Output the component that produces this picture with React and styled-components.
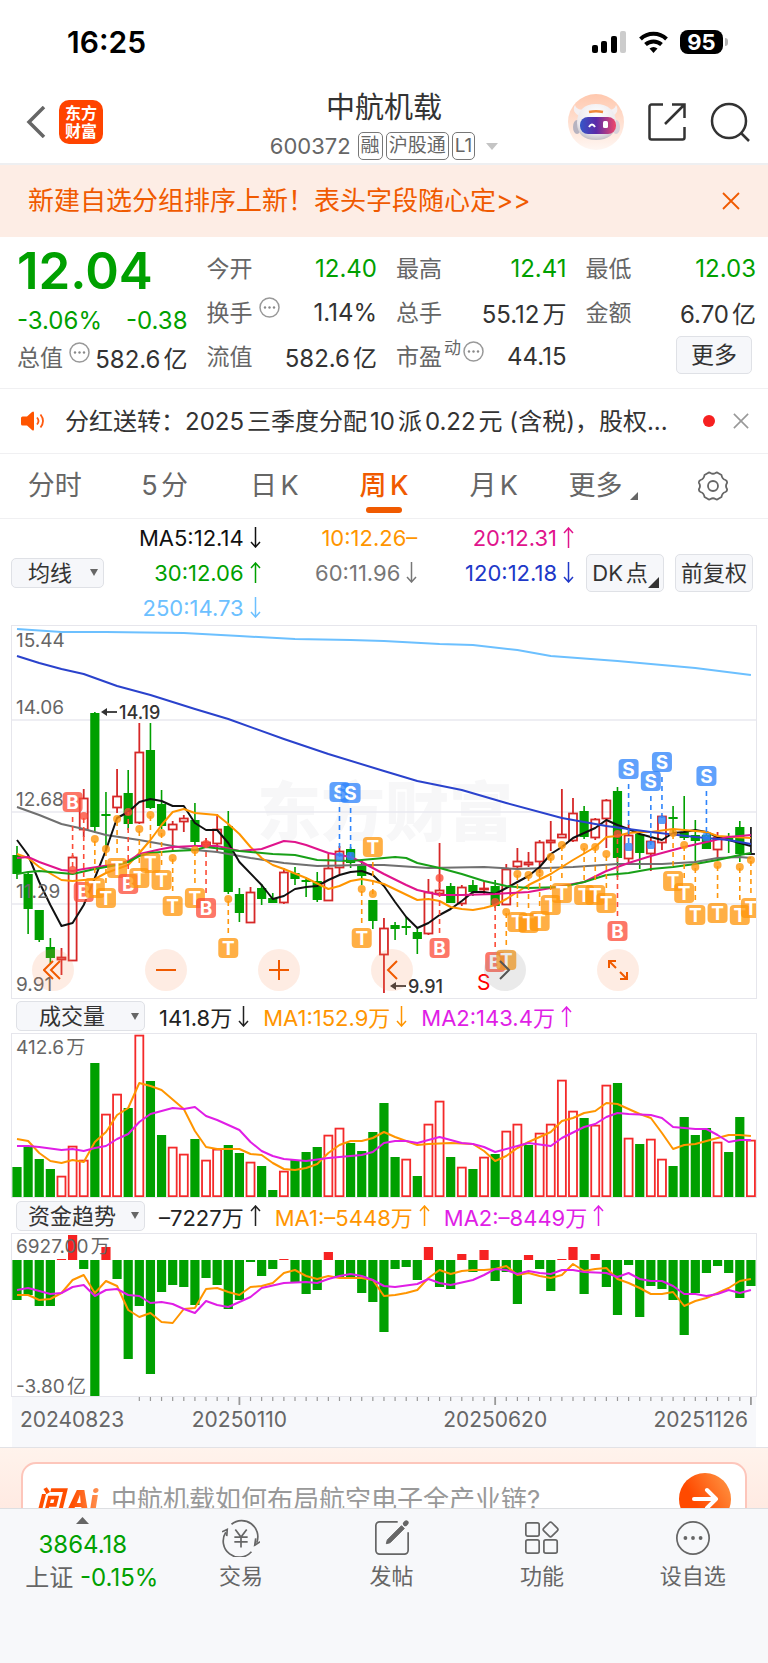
import React from 'react';
import styled, { createGlobalStyle } from 'styled-components';

const GREEN = '#00a000';
const ORANGE = '#f05a00';
const AMBER = '#ff9500';
const VIOLET = '#e01ee6';

const GlobalStyle = createGlobalStyle`
  * { box-sizing: border-box; }
  body {
    margin: 0;
    background: #fff;
    color: #333;
    font-family: Inter, "Noto Sans CJK SC", sans-serif;
    text-autospace: normal;
  }
  button, select, input { font: inherit; color: inherit; margin: 0; }
  button { background: none; border: 0; padding: 0; cursor: pointer; }
  svg { display: block; flex: none; }
`;

/* ---------- status bar and header ---------- */

const StatusBar = styled.div`
  display: flex;
  align-items: center;
  justify-content: space-between;
  height: 76px;
  padding: 8px 40px 0 67px;
`;
const Clock = styled.time`
  font-size: 30px;
  font-weight: 600;
  color: #000;
`;
const StatusIcons = styled.div`
  display: flex;
  align-items: center;
  gap: 12px;
`;
const Battery = styled.div`
  display: flex;
  align-items: center;
  gap: 2px;
  &::after {
    content: '';
    width: 3px;
    height: 8px;
    border-radius: 0 3px 3px 0;
    background: #b4b4b4;
  }
`;
const BatteryLevel = styled.span`
  width: 43px;
  height: 24px;
  border-radius: 8px;
  background: #000;
  color: #fff;
  font-size: 22px;
  font-weight: 700;
  line-height: 24px;
  text-align: center;
`;
const Header = styled.header`
  display: grid;
  grid-template-columns: 1fr auto 1fr;
  height: 89px;
  padding: 0 18px;
  border-bottom: 2px solid #eeeff1;
`;
const HeaderSide = styled.div`
  display: flex;
  align-items: center;
  justify-content: ${(p) => (p.$end ? 'flex-end' : 'flex-start')};
  gap: ${(p) => (p.$end ? 24 : 13)}px;
  height: 92px;
  padding-left: 8px;
`;
const HomeButton = styled.button`
  width: 44px;
  height: 44px;
  border-radius: 10px;
  background: #ff4400;
  color: #fff;
  font-size: 16px;
  font-weight: 700;
  line-height: 18px;
`;
const Title = styled.div`
  display: flex;
  flex-direction: column;
  align-items: center;
  h1 {
    margin: 12px 0 0;
    font-size: 29px;
    font-weight: 400;
    line-height: 40px;
  }
`;
const Code = styled.div`
  display: flex;
  align-items: center;
  gap: 3px;
  height: 36px;
  font-size: 22px;
  color: #666;
`;
const CodeText = styled.span`
  margin-right: 4px;
`;
const Tag = styled.span`
  height: 28px;
  padding: 0 2px;
  border: 1px solid #777;
  border-radius: 5px;
  font-size: 19px;
  line-height: 26px;
`;
const Caret = styled.i`
  width: 0;
  height: 0;
  border: ${(p) => p.$size}px solid transparent;
  border-bottom-width: 0;
  border-top: 7px solid ${(p) => p.$color};
`;
const CodeCaret = styled(Caret)`
  margin-left: 8px;
`;

/* ---------- banner, quote, notice ---------- */

const Banner = styled.div`
  display: flex;
  align-items: center;
  justify-content: space-between;
  height: 72px;
  padding: 0 28px;
  background: #fdede5;
  color: ${ORANGE};
  font-size: 26px;
  a { padding-bottom: 5px; color: inherit; text-decoration: none; }
`;
const Quote = styled.section`
  display: grid;
  grid-template-columns: repeat(4, 1fr);
  gap: 19px;
  height: 151px;
  padding: 5px 12px 0 17px;
`;
const QuoteColumn = styled.div`
  display: flex;
  flex-direction: column;
  padding-top: ${(p) => (p.$lead ? 0 : 4)}px;
`;
const Price = styled.strong`
  font-size: 51px;
  font-weight: 600;
  line-height: 58px;
  color: ${GREEN};
`;
const Cell = styled.div`
  display: flex;
  align-items: center;
  justify-content: space-between;
  height: ${(p) => p.$height || 44}px;
  font-size: 24px;
  color: ${(p) => (p.$down ? GREEN : '#333')};
  white-space: nowrap;
`;
const CellLabel = styled.span`
  display: flex;
  align-items: center;
  padding-bottom: 2px;
  font-size: 23px;
  color: #666;
  svg { margin: 0 0 8px 6px; }
  sup { font-size: 17px; line-height: 20px; margin: 0 -4px 14px 2px; }
`;
const OutlineButton = styled.button`
  position: relative;
  height: 38px;
  min-width: ${(p) => p.$width}px;
  border: 1px solid #dfe1e6;
  border-radius: 5px;
  background: #f6f7fa;
  font-size: 22px;
  line-height: 30px;
  white-space: nowrap;
`;
const MoreButton = styled(OutlineButton)`
  margin: 0 4px 2px auto;
  font-size: 23px;
`;
const MenuButton = styled(OutlineButton)`
  padding: 0 12px 0 2px;
`;
const Notice = styled.section`
  display: flex;
  align-items: center;
  height: 65px;
  padding: 0 19px 0 20px;
  border-top: 1px solid #f0f0f2;
  font-size: 24px;
  p {
    flex: 1;
    margin: 0 0 4px 20px;
    white-space: nowrap;
    overflow: hidden;
  }
`;
const UnreadDot = styled.i`
  width: 12px;
  height: 12px;
  margin: 0 18px;
  border-radius: 50%;
  background: #f62020;
`;

/* ---------- tabs and moving averages ---------- */

const Tabs = styled.nav`
  display: grid;
  grid-template-columns: repeat(7, 1fr);
  height: 66px;
  border-top: 1px solid #f0f0f2;
  border-bottom: 1px solid #f0f0f2;
`;
const Tab = styled.button`
  position: relative;
  display: flex;
  align-items: center;
  justify-content: center;
  padding-bottom: ${(p) => (p.$icon ? 0 : 5)}px;
  font-size: 27px;
  font-weight: ${(p) => (p.$active ? 500 : 400)};
  color: ${(p) => (p.$active ? ORANGE : '#666')};
  &::after {
    content: '';
    display: ${(p) => (p.$active ? 'block' : 'none')};
    position: absolute;
    bottom: 5px;
    left: calc(50% - 18px);
    width: 36px;
    height: 6px;
    border-radius: 3px;
    background: ${ORANGE};
  }
`;
const Corner = styled.i`
  width: 0;
  height: 0;
  border-style: solid;
  border-width: 0 0 ${(p) => p.$size}px ${(p) => p.$size}px;
  border-color: transparent transparent ${(p) => p.$color} transparent;
`;
const TabCorner = styled(Corner)`
  margin: 24px 0 0 8px;
`;
const ButtonCorner = styled(Corner)`
  position: absolute;
  right: 4px;
  bottom: 3px;
`;
const Averages = styled.section`
  display: flex;
  align-items: center;
  height: 107px;
  padding: 0 15px 0 11px;
`;
const AverageGrid = styled.div`
  display: grid;
  grid-template-columns: repeat(3, 1fr);
  grid-auto-rows: 35px;
  flex: 1;
  margin-right: 12px;
`;
const Reading = styled.span`
  display: flex;
  align-items: center;
  justify-content: flex-end;
  gap: 6px;
  font-size: 22px;
  color: ${(p) => p.$color};
  white-space: nowrap;
  text-autospace: no-autospace;
`;
const ButtonPair = styled.div`
  display: flex;
  gap: 11px;
`;
const Picker = styled.label`
  position: relative;
  display: flex;
  align-items: center;
  select {
    appearance: none;
    width: ${(p) => p.$width}px;
    height: 30px;
    padding: 0 20px 0 ${(p) => p.$left}px;
    border: 1px solid #dfe1e6;
    border-radius: 5px;
    background: #f6f7fa;
    font-size: 22px;
    line-height: 26px;
  }
  i {
    position: absolute;
    right: 6px;
    pointer-events: none;
  }
`;

/* ---------- charts ---------- */

const ChartFrame = styled.div`
  position: relative;
  margin: 0 12px;
  outline: 1px solid #e6e6ec;
  overflow: hidden;
  > svg { width: 100%; height: auto; }
`;
const ChartControls = styled.div`
  position: absolute;
  left: 20px;
  right: 117px;
  bottom: 7px;
  display: flex;
  justify-content: space-between;
`;
const RoundButton = styled.button`
  display: flex;
  align-items: center;
  justify-content: center;
  width: 42px;
  height: 42px;
  border-radius: 50%;
  background: ${(p) => (p.$muted ? 'rgba(150,150,150,.2)' : 'rgba(250,140,90,.17)')};
  color: ${(p) => (p.$muted ? '#555' : ORANGE)};
`;
const IndicatorRow = styled.div`
  display: flex;
  align-items: center;
  gap: 14px;
  height: ${(p) => p.$height}px;
  padding-left: 16px;
`;
const TimeAxis = styled.div`
  margin: 0 12px;
  height: 51px;
  background: #f7f8fb;
  > svg { width: 100%; height: auto; }
`;

/* ---------- assistant and bottom navigation ---------- */

const Assistant = styled.section`
  height: 61px;
  padding: 14px 21px 0;
  overflow: hidden;
  border-top: 1px solid #e2e2e6;
  background: linear-gradient(#fff3ec, #ffeae2);
`;
const AssistantCard = styled.div`
  display: flex;
  align-items: center;
  gap: 9px;
  height: 74px;
  padding: 0 14px 0 13px;
  border: 2px solid #fdc6bb;
  border-radius: 15px;
  background: #fff;
  input {
    flex: 1;
    padding: 0;
    border: 0;
    outline: 0;
    background: none;
    font-size: 26px;
  }
  input::placeholder { color: #999; opacity: 1; }
`;
const AssistantName = styled.b`
  padding-right: 4px;
  font-size: 28px;
  font-weight: 900;
  font-style: italic;
  background: linear-gradient(90deg, #ff4e00 55%, #ff9a5c);
  background-clip: text;
  color: transparent;
`;
const SendButton = styled.button`
  display: flex;
  align-items: center;
  justify-content: center;
  width: 52px;
  height: 52px;
  border-radius: 50%;
  background: linear-gradient(60deg, #ff4a00 35%, #ff9a48);
`;
const BottomNav = styled.nav`
  display: grid;
  grid-template-columns: 11fr repeat(4, 10fr);
  height: 155px;
  border-top: 1px solid #dddfe2;
  background: #f7f8fa;
  color: #666;
`;
const NavItem = styled.a`
  display: flex;
  flex-direction: column;
  align-items: center;
  padding-top: 10px;
  color: inherit;
  font-size: 22px;
  line-height: 28px;
  text-decoration: none;
  svg { margin-bottom: 5px; }
`;
const IndexItem = styled.button`
  display: flex;
  flex-direction: column;
  align-items: center;
  align-self: start;
  padding-top: 8px;
  font-size: 24px;
  line-height: 33px;
  white-space: nowrap;
  svg { margin-bottom: 4px; }
  em { color: ${GREEN}; font-style: normal; }
`;
const IndexChange = styled.span`
  padding-left: 18px;
`;

/* ---------- data ---------- */

// Each candle: [kind, high, low, body top, body bottom]
const candles = [
  ['g', 220, 253, 229, 248], ['g', 246, 308, 248, 283], ['g', 284, 316, 284, 314], ['g', 312, 337, 321, 332],
  ['r', 322, 349, 331, 333], ['r', 229, 334, 231, 334], ['r', 163, 211, 172, 203], ['g', 86, 207, 87, 201],
  ['g', 166, 224, 188, 190], ['r', 143, 187, 170, 181], ['g', 144, 204, 167, 198], ['r', 97, 198, 126, 196],
  ['g', 97, 183, 124, 182], ['g', 164, 203, 178, 200], ['r', 195, 224, 198, 203], ['r', 189, 206, 192, 195],
  ['g', 177, 219, 194, 216], ['r', 212, 222, 216, 218], ['r', 188, 226, 203, 217], ['g', 185, 268, 200, 266],
  ['g', 262, 296, 268, 287], ['r', 261, 296, 266, 296], ['g', 258, 279, 262, 273], ['g', 267, 277, 272, 277],
  ['r', 242, 278, 246, 276], ['g', 241, 259, 247, 253], ['g', 251, 271, 254, 256], ['g', 246, 276, 255, 274],
  ['r', 228, 275, 242, 274], ['r', 220, 248, 225, 241], ['g', 221, 242, 223, 237], ['g', 234, 259, 239, 250],
  ['g', 274, 303, 274, 295], ['r', 292, 367, 302, 328], ['g', 296, 314, 299, 303], ['g', 291, 309, 300, 302],
  ['g', 302, 328, 306, 313], ['r', 253, 309, 266, 307], ['r', 217, 268, 264, 267], ['g', 257, 277, 260, 277],
  ['r', 259, 280, 261, 277], ['g', 254, 270, 259, 266], ['r', 256, 268, 262, 263], ['g', 254, 282, 260, 280],
  ['r', 238, 279, 243, 278], ['r', 222, 242, 235, 240], ['r', 226, 241, 236, 238], ['r', 214, 247, 216, 235],
  ['r', 195, 225, 214, 216], ['r', 163, 212, 208, 211], ['r', 172, 216, 187, 214], ['g', 180, 213, 185, 211],
  ['r', 192, 214, 193, 211], ['r', 173, 222, 174, 192], ['g', 161, 251, 165, 232], ['r', 198, 236, 209, 232],
  ['g', 207, 243, 208, 227], ['r', 210, 245, 215, 227], ['r', 189, 224, 190, 216], ['g', 180, 206, 191, 193],
  ['g', 170, 214, 206, 212], ['g', 194, 237, 209, 215], ['g', 207, 223, 209, 223], ['r', 206, 234, 211, 223],
  ['g', 207, 227, 212, 214], ['g', 195, 236, 201, 228], ['k', 201, 228, 227, 228],
];

// Lines are "week,y" pairs
const priceLines = [
  ['#6cc0ff', '0,3 4,6 8,6 15,7 20,10 25,13 30,14 33,15 38,18 41,19 45,24 48,30 54,35 61,42 66,49'],
  ['#707070', '0,181 2,189 4,198 6,203 8,209 11,214 14,220 16,224 18,226 21,232 24,237 27,240 31,239 33,239 37,242 42,241 45,243 50,241 54,238 58,238 61,236 63,232 65,231 66,232'],
  ['#111111', '0,214 1,229 2,256 3,279 4,300 5,297 6,279 7,252 8,224 9,192 10,186 11,176 12,173 13,175 14,180 15,180 16,197 17,204 18,204 19,217 20,236 22,259 23,273 24,270 25,263 26,261 27,260 28,254 29,249 30,246 31,245 32,249 33,260 34,276 35,291 36,302 37,297 38,289 39,283 40,275 41,266 42,266 43,268 44,262 45,256 46,250 47,241 48,228 49,221 50,212 51,207 52,202 53,194 54,199 55,203 56,208 57,211 58,214 59,207 60,206 61,204 62,206 63,211 64,214 65,217 66,220'],
  [AMBER, '0,228 1,232 2,241 4,254 5,255 7,253 8,247 9,243 10,239 11,227 12,214 13,199 14,186 15,183 16,187 18,189 19,198 20,208 21,221 22,232 23,239 24,243 26,252 28,263 29,260 30,255 31,253 32,255 33,258 36,274 37,273 38,275 39,281 40,283 41,284 42,282 43,279 44,273 45,266 46,259 48,248 50,234 52,221 53,211 54,210 55,207 56,206 57,206 59,203 60,204 62,206 63,210 66,212'],
  ['#e0148c', '0,232 1,231 2,236 4,244 5,245 6,243 9,238 10,235 11,228 13,223 14,221 16,220 18,220 20,225 22,223 24,215 25,216 26,219 27,223 28,227 30,231 31,236 32,242 33,248 35,259 36,264 38,269 40,269 43,268 46,266 48,262 51,256 53,245 55,237 57,230 58,227 60,221 62,216 64,211 66,209'],
  ['#18a018', '0,248 1,246 2,245 4,247 5,248 7,243 9,239 10,236 11,230 12,227 14,225 16,224 17,221 20,225 23,228 25,229 27,234 30,235 33,232 34,231 35,232 36,237 38,242 40,248 42,255 44,260 46,262 49,261 51,256 53,249 55,247 57,243 59,241 61,238 63,234 65,229 66,227'],
  ['#2a42cc', '0,30 2,37 4,43 6,48 9,60 12,69 16,83 19,93 24,113 28,128 33,145 36,155 40,164 44,177 49,192 53,200 57,206 61,211 64,214 66,218'],
];

// Each signal: [letter, week, dot y, badge y]
const signals = [
  ['B', 5, 244, 176], ['B', 6, 190, 266], ['T', 7, 213, 262], ['T', 8, 223, 272], ['T', 9, 193, 242],
  ['B', 10, 186, 258], ['T', 11, 203, 252], ['T', 12, 189, 237], ['T', 13, 207, 254], ['T', 14, 232, 280],
  ['T', 16, 224, 272], ['B', 17, 218, 282], ['T', 19, 273, 322], ['S', 29, 231, 166], ['S', 30, 230, 167],
  ['T', 31, 263, 312], ['T', 32, 268, 221], ['B', 38, 252, 322], ['B', 43, 276, 336], ['T', 44, 286, 334],
  ['T', 45, 248, 296], ['T', 46, 249, 297], ['T', 47, 247, 295], ['T', 48, 231, 279], ['T', 49, 219, 267],
  ['T', 51, 221, 269], ['T', 52, 221, 269], ['T', 53, 228, 277], ['B', 54, 208, 305], ['S', 55, 221, 143],
  ['S', 57, 219, 155], ['S', 58, 194, 136], ['T', 59, 207, 255], ['T', 60, 219, 267], ['T', 61, 241, 289],
  ['S', 62, 211, 150], ['T', 63, 239, 287], ['T', 65, 241, 289], ['T', 66, 234, 282],
];
const signalColors = { B: '#fc4c38', S: '#2e84fb', T: '#ff960a' };

const volumeTops = [
  133, 113, 125, 135, 142, 112, 126, 29, 80, 60, 74, 1, 47, 101, 113, 120, 105, 126, 115, 111, 119, 128, 132,
  156, 137, 126, 118, 113, 101, 94, 109, 117, 98, 69, 123, 125, 142, 90, 67, 123, 133, 135, 123, 120, 97, 90,
  111, 99, 90, 46, 77, 84, 91, 51, 49, 104, 110, 105, 125, 132, 83, 101, 94, 108, 118, 83, 106,
];
const volumeKinds = 'ggggrrrgrrgrggrrgrrggrggrgggrrgggggrgrrgrgrgrrgrrrrgrrgrgrrggggrggr';
const volumeLines = [
  [AMBER, '0,105 1,107 2,119 3,127 4,129 5,126 6,128 7,108 8,98 9,81 10,74 11,49 12,52 13,56 15,75 16,97 17,113 18,115 20,115 21,120 22,121 23,129 24,135 25,136 26,134 27,130 28,119 29,111 30,107 31,107 32,104 33,98 34,103 36,111 37,110 39,109 41,110 42,117 43,127 44,122 45,114 46,108 47,103 48,98 49,87 50,84 51,79 52,77 53,69 54,70 55,75 56,80 57,84 58,99 59,115 60,111 61,110 62,107 63,104 64,101 65,101 66,102'],
  [VIOLET, '0,112 1,112 2,113 4,116 5,115 6,117 7,114 8,112 9,105 10,100 11,88 12,80 13,77 14,74 15,75 16,73 17,82 18,86 19,91 20,96 21,108 22,117 23,122 24,125 26,127 28,124 31,121 32,118 33,109 34,107 35,107 36,109 38,103 40,109 41,110 42,113 43,118 45,112 46,109 48,112 49,104 51,93 52,90 53,83 54,79 55,80 57,81 58,84 59,93 61,95 62,95 63,101 64,108 65,106 66,106'],
];

const FUND_ZERO = 26;
const fundEnds = [
  66, 61, 72, 72, 25, 1, 35, 162, 13, 45, 125, 72, 140, 58, 51, 53, 71, 44, 51, 75, 66, 28, 42, 35, 25, 48, 60,
  56, 18, 43, 43, 59, 68, 98, 35, 33, 46, 13, 53, 55, 20, 38, 16, 47, 38, 70, 21, 35, 57, 25, 13, 60, 20, 53,
  81, 31, 83, 52, 55, 66, 101, 59, 39, 32, 39, 64, 52,
];
const fundLines = [
  [AMBER, '0,61 1,61 2,66 3,65 4,59 5,46 6,41 7,59 8,47 9,52 10,76 11,83 12,79 13,88 14,89 15,75 16,74 17,55 18,54 19,58 20,61 21,53 22,52 23,49 24,39 25,36 26,42 27,45 28,42 29,44 31,44 32,46 33,62 34,61 35,59 36,56 37,44 38,36 39,40 40,37 41,36 42,36 43,35 44,32 45,41 46,39 47,42 48,44 49,41 50,30 51,37 52,35 53,34 54,45 55,49 56,54 57,60 58,60 59,58 60,72 61,67 62,64 63,59 64,54 65,47 66,45'],
  [VIOLET, '0,56 1,54 2,57 3,60 4,59 5,53 6,51 7,62 8,56 9,55 10,61 11,62 12,69 13,68 14,70 15,75 16,79 17,67 18,71 19,73 20,68 21,63 22,54 24,49 26,48 27,49 28,45 29,42 30,40 31,42 32,46 33,52 34,53 36,50 37,45 38,49 39,51 41,46 42,41 43,35 44,36 45,40 46,37 47,39 48,40 49,36 50,36 51,38 53,39 54,43 55,39 56,45 57,47 58,47 59,52 60,60 61,60 62,62 63,60 64,56 65,59 66,56'],
];

const majorWeeks = [20, 43, 66];

const averages = [
  ['MA5:12.14', '#111', 'down'], ['10:12.26–', AMBER, ''], ['20:12.31', '#e0148c', 'up'],
  ['30:12.06', GREEN, 'up'], ['60:11.96', '#777', 'down'], ['120:12.18', '#2038c8', 'down'],
  ['250:14.73', '#6cc0ff', 'down'],
];

const quoteColumns = [
  [['今开', '12.40', true], ['换手', '1.14%', false, 'info'], ['流值', '582.6亿']],
  [['最高', '12.41', true], ['总手', '55.12万'], ['市盈', '44.15', false, 'dynamic']],
  [['最低', '12.03', true], ['金额', '6.70亿']],
];

const volumeReadings = [['141.8万', '#222', true], ['MA1:152.9万', AMBER, true], ['MA2:143.4万', VIOLET, false]];
const fundReadings = [['–7227万', '#222', false], ['MA1:–5448万', AMBER, false], ['MA2:–8449万', VIOLET, false]];

/* ---------- drawing helpers ---------- */

const weekX = (i) => 5 + i * 11.12;

const toPoints = (pairs) =>
  pairs
    .split(' ')
    .map((pair) => {
      const [i, y] = pair.split(',');
      return `${weekX(Number(i))},${y}`;
    })
    .join(' ');

const Lines = ({ lines }) =>
  lines.map(([color, pairs]) => (
    <polyline key={color} fill="none" stroke={color} strokeWidth="2" strokeLinejoin="round" points={toPoints(pairs)} />
  ));

const ChartLabel = ({ x = 4, y, size = 19, children, ...rest }) => (
  <text x={x} y={y} fontSize={size} fill="#666" dominantBaseline="central" {...rest}>
    {children}
  </text>
);

const LeftArrow = ({ x, y }) => (
  <g>
    <path d={`M${x + 16} ${y}H${x + 2}`} stroke="#333" strokeWidth="1.8" />
    <path d={`M${x} ${y}l6-4v8z`} fill="#333" />
  </g>
);

const Candle = ({ i, candle: [kind, high, low, top, bottom] }) => {
  const x = weekX(i);
  if (kind === 'k') {
    return <path d={`M${x} ${high}V${low}M${x - 5} ${bottom}h9`} stroke="#222" strokeWidth="1.8" />;
  }
  if (kind === 'g') {
    return (
      <g fill={GREEN}>
        <rect x={x - 0.8} y={high} width="1.6" height={low - high} />
        <rect x={x - 4.6} y={top} width="9.2" height={bottom - top} />
      </g>
    );
  }
  return (
    <g stroke="#d62828" strokeWidth="1.8" fill="none">
      <path d={`M${x} ${high}V${top}M${x} ${bottom}V${low}`} />
      <rect x={x - 4} y={top + 0.5} width="8" height={bottom - top} />
    </g>
  );
};

const Signal = ({ signal: [letter, i, dot, badge] }) => {
  const x = weekX(i);
  const color = signalColors[letter];
  const edge = badge > dot ? badge - 15 : badge + 15;
  return (
    <g>
      <path d={`M${x} ${edge}V${dot}`} stroke={color} strokeWidth="1.6" strokeDasharray="5 4" />
      {letter === 'S' ? (
        <rect x={x - 4} y={dot - 4} width="8" height="8" rx="2" fill={color} opacity=".8" />
      ) : (
        <circle cx={x} cy={dot} r="4" fill={color} opacity=".8" />
      )}
      <rect x={x - 10} y={badge - 10} width="20" height="20" rx="4" fill={color} opacity=".76" />
      <text x={x} y={badge} fill="#fff" fontSize="19" fontWeight="700" textAnchor="middle" dominantBaseline="central">
        {letter}
      </text>
    </g>
  );
};

const Arrow = ({ down }) => (
  <svg width="11" height="21" viewBox="0 0 11 21" fill="none" stroke="currentColor" strokeWidth="1.5">
    <path d={down ? 'M5.5 0V20M1 15l4.5 5 4.5-5' : 'M5.5 21V1M1 6l4.5-5L10 6'} />
  </svg>
);

const Cross = ({ size, color = 'currentColor' }) => (
  <svg width={size} height={size} viewBox="0 0 18 18" stroke={color} strokeWidth="1.8">
    <path d="M1 1l16 16M17 1L1 17" />
  </svg>
);

const InfoIcon = () => (
  <svg width="21" height="21" viewBox="0 0 21 21" fill="none" stroke="#999" strokeWidth="1.5">
    <circle cx="10.5" cy="10.5" r="9.5" />
    <g fill="#888" stroke="none">
      <circle cx="6" cy="10.5" r="1.2" />
      <circle cx="10.5" cy="10.5" r="1.2" />
      <circle cx="15" cy="10.5" r="1.2" />
    </g>
  </svg>
);

const Robot = () => (
  <svg width="56" height="56" viewBox="0 0 56 56">
    <defs>
      <linearGradient id="halo" x1="0" y1="0" x2="0" y2="1">
        <stop offset="0" stopColor="#ffc8ae" />
        <stop offset="1" stopColor="#fff7f3" />
      </linearGradient>
      <linearGradient id="visor">
        <stop offset="0" stopColor="#3457c8" />
        <stop offset=".45" stopColor="#5b2aa8" />
        <stop offset="1" stopColor="#f0486a" />
      </linearGradient>
      <radialGradient id="helmet" cx=".5" cy=".3" r=".75">
        <stop offset="0" stopColor="#ffffff" />
        <stop offset=".7" stopColor="#ebe8ec" />
        <stop offset="1" stopColor="#b9b4bd" />
      </radialGradient>
    </defs>
    <circle cx="28" cy="28" r="28" fill="url(#halo)" />
    <path d="M7 11c-3 5 0 9 5 11l5-6c-5 0-9-1-10-5zM48 11c3 5 1 9-4 11l-5-6c5 0 8-1 9-5z" fill="#f4f0f2" />
    <ellipse cx="9" cy="33" rx="4" ry="7" fill="#b7b3c0" />
    <ellipse cx="48" cy="33" rx="4" ry="7" fill="#d8d2da" />
    <path d="M28 10c12 0 20 7 20 19 0 11-8 17-20 17S9 40 9 29c0-12 7-19 19-19z" fill="url(#helmet)" />
    <path d="M21 18q7-1.500 14 0" stroke="#f08a3c" strokeWidth="2.500" fill="none" />
    <rect x="12" y="23" width="36" height="17" rx="8" fill="url(#visor)" />
    <path d="M21 33q3-5 6 0" stroke="#fff" strokeWidth="2" fill="none" />
    <rect x="35" y="27" width="5" height="7" rx="1.500" fill="#fff" />
  </svg>
);

const TradeIcon = () => (
  <>
    <path d="M10 5.500A17 17 0 0 1 36.500 25M31 34.500A17 17 0 0 1 4 14" />
    <path d="M0 13.500l5.500-2.500-.5 7M40 24l-5.500 3.500 1-7" />
    <path d="M14 11l6 8 6-8M13 19h14M13 24h14M20 19v11" />
  </>
);
const PostIcon = () => (
  <>
    <path d="M26 3H7a4 4 0 0 0-4 4v26a4 4 0 0 0 4 4h26a4 4 0 0 0 4-4V14" />
    <path d="M14 26l1-4L30 7l3 3-15 15z" fill="currentColor" strokeWidth="1" />
    <path d="M34 5l1-1" strokeWidth="5" strokeLinecap="round" />
  </>
);
const FeaturesIcon = () => (
  <>
    <rect x="3" y="4" width="14" height="14" rx="2" />
    <rect x="3" y="22" width="14" height="14" rx="2" />
    <rect x="22" y="22" width="14" height="14" rx="2" />
    <rect x="23" y="5" width="12" height="12" rx="2" transform="rotate(45 29 11)" />
  </>
);
const WatchIcon = () => (
  <>
    <circle cx="20" cy="20" r="17" />
    <g fill="currentColor" stroke="none">
      <circle cx="12" cy="20" r="2" />
      <circle cx="20" cy="20" r="2" />
      <circle cx="28" cy="20" r="2" />
    </g>
  </>
);
const navItems = [
  ['交易', TradeIcon],
  ['发帖', PostIcon],
  ['功能', FeaturesIcon],
  ['设自选', WatchIcon],
];

/* ---------- chart panels ---------- */

const Indicator = ({ name, left, height, readings }) => (
  <IndicatorRow $height={height}>
    <Picker $width={129} $left={left}>
      <select aria-label="副图指标" defaultValue={name}>
        <option>{name}</option>
      </select>
      <Caret $size={4} $color="#666" />
    </Picker>
    {readings.map(([text, color, down]) => (
      <Reading key={text} $color={color}>
        {text}
        <Arrow down={down} />
      </Reading>
    ))}
  </IndicatorRow>
);

// [label, icon path, icon width, muted]
const chartControls = [
  ['最左', 'M10 1L1 10l9 9M17 1l-9 9 9 9', 20],
  ['缩小', 'M0 10h20', 20],
  ['放大', 'M0 10h20M10 0v20', 20],
  ['左移', 'M11 1L2 10l9 9', 12],
  ['右移', 'M1 1l9 9-9 9', 12, true],
  ['全屏', 'M1 8V1h7M1 1l7 7M19 12v7h-7M19 19l-7-7', 20],
];

const PriceChart = () => (
  <ChartFrame>
    <svg viewBox="0 0 744 372">
      <text x="245" y="209" fontSize="64" fontWeight="900" fill="#f7f7f8">东方财富</text>
      <path d="M0 94H744M0 186H744M0 278H744" stroke="#e9e9f0" strokeWidth="1.5" />
      {candles.map((candle, i) => (
        <Candle key={i} i={i} candle={candle} />
      ))}
      <Lines lines={priceLines} />
      <ChartLabel y={14}>15.44</ChartLabel>
      <ChartLabel y={81}>14.06</ChartLabel>
      <ChartLabel y={173}>12.68</ChartLabel>
      <ChartLabel y={265}>11.29</ChartLabel>
      <ChartLabel y={358}>9.91</ChartLabel>
      {signals.map((signal) => (
        <Signal key={signal[1]} signal={signal} />
      ))}
      <LeftArrow x={89} y={86} />
      <ChartLabel x={107} y={86} size={18} fill="#333" fontWeight="500">14.19</ChartLabel>
      <LeftArrow x={378} y={360} />
      <ChartLabel x={396} y={360} size={18} fill="#333" fontWeight="500">9.91</ChartLabel>
      <ChartLabel x={465} y={356} size={21} fill="#f00">S</ChartLabel>
    </svg>
    <ChartControls>
      {chartControls.map(([label, path, width, muted]) => (
        <RoundButton key={label} aria-label={label} $muted={muted}>
          <svg width={width} height="20" viewBox={`0 0 ${width} 20`} fill="none" stroke="currentColor" strokeWidth="2">
            <path d={path} />
          </svg>
        </RoundButton>
      ))}
    </ChartControls>
  </ChartFrame>
);

const VolumeChart = () => (
  <ChartFrame>
    <svg viewBox="0 0 744 163">
      {volumeTops.map((top, i) =>
        volumeKinds[i] === 'g' ? (
          <rect key={i} x={weekX(i) - 4.6} y={top} width="9.2" height={163 - top} fill={GREEN} />
        ) : (
          <rect key={i} x={weekX(i) - 4} y={top + 0.6} width="8" height={161.6 - top} fill="#fff" stroke="#f42a2a" strokeWidth="1.8" />
        )
      )}
      <Lines lines={volumeLines} />
      <ChartLabel y={13}>412.6万</ChartLabel>
    </svg>
  </ChartFrame>
);

const FundChart = () => (
  <ChartFrame>
    <svg viewBox="0 0 744 162">
      {fundEnds.map((end, i) => (
        <rect
          key={i}
          x={weekX(i) - 4.6}
          y={Math.min(end, FUND_ZERO)}
          width="9.2"
          height={Math.abs(end - FUND_ZERO)}
          fill={end > FUND_ZERO ? GREEN : '#f62222'}
        />
      ))}
      <Lines lines={fundLines} />
      <ChartLabel y={12}>6927.00万</ChartLabel>
      <ChartLabel y={152}>-3.80亿</ChartLabel>
    </svg>
  </ChartFrame>
);

const DateAxis = () => (
  <TimeAxis>
    <svg viewBox="0 0 744 51">
      {candles.map((_, i) => {
        if (i < 11) return null;
        const major = majorWeeks.includes(i);
        return <path key={i} d={`M${weekX(i)} 0v${major ? 9 : 5}`} stroke="#999" strokeWidth={major ? 1.8 : 1.2} />;
      })}
      <ChartLabel x={8} y={23} size={21}>20240823</ChartLabel>
      <ChartLabel x={weekX(20)} y={23} size={21} textAnchor="middle">20250110</ChartLabel>
      <ChartLabel x={weekX(43)} y={23} size={21} textAnchor="middle">20250620</ChartLabel>
      <ChartLabel x={736} y={23} size={21} textAnchor="end">20251126</ChartLabel>
    </svg>
  </TimeAxis>
);

export default function App() {
  return (
    <>
      <GlobalStyle />
      <StatusBar>
        <Clock>16:25</Clock>
        <StatusIcons>
          <svg width="35" height="22" viewBox="0 0 35 22">
            <rect x="0" y="14" width="6" height="8" rx="2" />
            <rect x="9" y="10" width="6" height="12" rx="2" />
            <rect x="19" y="5" width="6" height="17" rx="2" />
            <rect x="28" y="0" width="6" height="22" rx="2" fill="#ccc" />
          </svg>
          <svg width="29" height="22" viewBox="0 0 29 22" fill="none" stroke="#000" strokeWidth="4">
            <path d="M1.5 8a19 19 0 0 1 26 0" />
            <path d="M6.5 13.5a12 12 0 0 1 16 0" />
            <path d="M10.5 17.5q4-3 8 0l-4 4.5z" fill="#000" stroke="none" />
          </svg>
          <Battery>
            <BatteryLevel>95</BatteryLevel>
          </Battery>
        </StatusIcons>
      </StatusBar>

      <Header>
        <HeaderSide>
          <button aria-label="返回">
            <svg width="20" height="32" viewBox="0 0 20 32" fill="none" stroke="#666" strokeWidth="3.5">
              <path d="M18 1L3 16l15 15" />
            </svg>
          </button>
          <HomeButton>
            东方
            <br />
            财富
          </HomeButton>
        </HeaderSide>
        <Title>
          <h1>中航机载</h1>
          <Code>
            <CodeText>600372</CodeText>
            <Tag>融</Tag>
            <Tag>沪股通</Tag>
            <Tag>L1</Tag>
            <CodeCaret $size={6} $color="#c4c4c4" />
          </Code>
        </Title>
        <HeaderSide $end>
          <button aria-label="智能助手">
            <Robot />
          </button>
          <button aria-label="分享">
            <svg width="38" height="38" viewBox="0 0 38 38" fill="none" stroke="#333" strokeWidth="2.5">
              <path d="M15 1.500H3.500a2 2 0 0 0-2 2v31a2 2 0 0 0 2 2h31a2 2 0 0 0 2-2V24M24 1.500h12.500V15M36.500 1.500L17 21" />
            </svg>
          </button>
          <button aria-label="搜索">
            <svg width="40" height="40" viewBox="0 0 40 40" fill="none" stroke="#333" strokeWidth="2.5">
              <circle cx="19" cy="19" r="17" />
              <path d="M31 31l8 8" />
            </svg>
          </button>
        </HeaderSide>
      </Header>

      <Banner>
        <a href="#groups">新建自选分组排序上新！表头字段随心定&gt;&gt;</a>
        <button aria-label="关闭">
          <Cross size={18} />
        </button>
      </Banner>

      <Quote>
        <QuoteColumn $lead>
          <Price>12.04</Price>
          <Cell $height={40} $down>
            <span>-3.06%</span>
            <span>-0.38</span>
          </Cell>
          <Cell $height={34}>
            <CellLabel>
              总值
              <InfoIcon />
            </CellLabel>
            582.6亿
          </Cell>
        </QuoteColumn>
        {quoteColumns.map((cells, n) => (
          <QuoteColumn key={n}>
            {cells.map(([label, value, down, extra]) => (
              <Cell key={label} $down={down}>
                <CellLabel>
                  {label}
                  {extra === 'dynamic' && <sup>动</sup>}
                  {extra && <InfoIcon />}
                </CellLabel>
                {value}
              </Cell>
            ))}
            {n === 2 && (
              <Cell>
                <MoreButton $width={76}>更多</MoreButton>
              </Cell>
            )}
          </QuoteColumn>
        ))}
      </Quote>

      <Notice>
        <svg width="25" height="20" viewBox="0 0 25 20" fill="none" stroke="#ff5a10" strokeWidth="1.8">
          <path d="M1 7q0-1.5 1.5-1.5H7L12 1q2-1.5 2 1v16q0 2.5-2 1l-5-4.5H2.5Q1 14.500 1 13z" fill="#ff5500" stroke="none" />
          <path d="M17 6.5q3 3.5 0 7M20.5 3.5q5 6.5 0 13" />
        </svg>
        <p>分红送转：2025三季度分配10派0.22元 (含税)，股权...</p>
        <UnreadDot />
        <button aria-label="关闭公告">
          <Cross size={16} color="#999" />
        </button>
      </Notice>

      <Tabs>
        <Tab>分时</Tab>
        <Tab>5分</Tab>
        <Tab>日K</Tab>
        <Tab $active>周K</Tab>
        <Tab>月K</Tab>
        <Tab>
          更多
          <TabCorner $size={8} $color="#666" />
        </Tab>
        <Tab $icon aria-label="设置">
          <svg width="32" height="30" viewBox="0 0 32 30" fill="none" stroke="#666" strokeWidth="1.8" strokeLinejoin="round">
            <path d="M11 2Q12 1 13.500 2Q16 3.500 18.500 2Q20 1 21 2L24.500 4Q25 8 28.500 9Q30.500 10 30 12Q28 15 30 18Q30.500 20 28.500 21Q25 22 24.500 26L21 28Q20 29 18.500 28Q16 26.500 13.500 28Q12 29 11 28L7.500 26Q7 22 3.500 21Q1.500 20 2 18Q4 15 2 12Q1.500 10 3.500 9Q7 8 7.500 4Z" />
            <circle cx="16" cy="15" r="5" />
          </svg>
        </Tab>
      </Tabs>

      <Averages>
        <Picker $width={93} $left={16}>
          <select aria-label="主图指标" defaultValue="均线">
            <option>均线</option>
          </select>
          <Caret $size={4} $color="#666" />
        </Picker>
        <AverageGrid>
          {averages.map(([text, color, trend]) => (
            <Reading key={text} $color={color}>
              {text}
              {trend && <Arrow down={trend === 'down'} />}
            </Reading>
          ))}
        </AverageGrid>
        <ButtonPair>
          <MenuButton $width={78}>
            DK点
            <ButtonCorner $size={11} $color="#333" />
          </MenuButton>
          <OutlineButton $width={78}>前复权</OutlineButton>
        </ButtonPair>
      </Averages>

      <PriceChart />
      <Indicator name="成交量" left={22} height={36} readings={volumeReadings} />
      <VolumeChart />
      <Indicator name="资金趋势" left={11} height={37} readings={fundReadings} />
      <FundChart />
      <DateAxis />

      <Assistant>
        <AssistantCard>
          <AssistantName>问Ai</AssistantName>
          <input aria-label="提问" placeholder="中航机载如何布局航空电子全产业链?" />
          <SendButton aria-label="发送">
            <svg width="28" height="24" viewBox="0 0 28 24" fill="none" stroke="#fff" strokeWidth="4" strokeLinecap="round" strokeLinejoin="round">
              <path d="M3 12h22M16 3l9 9-9 9" />
            </svg>
          </SendButton>
        </AssistantCard>
      </Assistant>

      <BottomNav>
        <IndexItem>
          <svg width="13" height="7" viewBox="0 0 13 7"><path d="M0 7L6.5 0 13 7z" fill="#666" /></svg>
          <em>3864.18</em>
          <IndexChange>
            上证 <em>-0.15%</em>
          </IndexChange>
        </IndexItem>
        {navItems.map(([label, Icon]) => (
          <NavItem key={label} href={`#${label}`}>
            <svg width="38" height="38" viewBox="0 0 40 40" fill="none" stroke="currentColor" strokeWidth="1.8">
              <Icon />
            </svg>
            {label}
          </NavItem>
        ))}
      </BottomNav>
    </>
  );
}
